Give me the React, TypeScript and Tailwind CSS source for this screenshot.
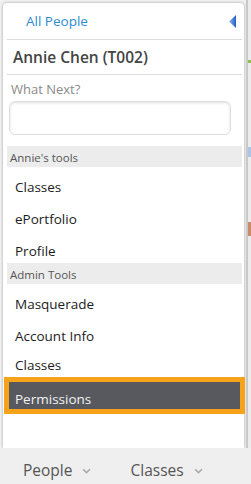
import React from "react";

function Chevron() {
  return (
    <svg width="9" height="6" viewBox="0 0 9 6" className="ml-[10px] mt-[9px]">
      <path d="M1 1.2 L4.5 4.6 L8 1.2" fill="none" stroke="#a9a9a9" strokeWidth="1.6" />
    </svg>
  );
}

function Item({ label }: { label: string }) {
  return (
    <div className="h-[32px] pt-[11px] pl-[8px] text-[13.5px] leading-[19px] text-[#1c1c1c]">{label}</div>
  );
}

function Header({ label }: { label: string }) {
  return (
    <div className="h-[21px] bg-[#ececec] pl-[3px] pt-[3px] text-[11.5px] leading-[17px] text-[#555]">{label}</div>
  );
}

export default function App() {
  return (
    <div
      className="w-[251px] h-[484px] flex flex-col bg-[#f1f1f1] overflow-hidden"
      style={{ fontFamily: '"Open Sans", "Noto Sans", sans-serif' }}
    >
      <div className="flex h-[448px]">
        <div className="w-[246px] pt-[3px] pl-[3px] pr-[2px] bg-[#f1f1f1]">
          <div className="h-[445px] bg-white rounded-t-[4px] shadow-[0_0_3px_rgba(0,0,0,0.35)] pl-[4px] pr-[2px] flex flex-col">
            <div className="h-[36px] flex items-center justify-between pl-[19px] pr-[6px]">
              <span className="text-[13.5px] text-[#2c8dd1] mt-[1px]">All People</span>
              <svg width="7" height="13" viewBox="0 0 7 13">
                <defs>
                  <linearGradient id="tri" x1="0" y1="0" x2="1" y2="0">
                    <stop offset="0" stopColor="#8db8ee" />
                    <stop offset="1" stopColor="#1f5fc4" />
                  </linearGradient>
                </defs>
                <polygon points="7,0 7,13 0,6.5" fill="url(#tri)" />
              </svg>
            </div>
            <div className="h-px bg-[#dcdcdc]" />
            <div className="h-[34px] pl-[6px] pt-[6px] text-[15.5px] font-semibold leading-[22px] text-[#444]">
              Annie Chen (T002)
            </div>
            <div className="h-px bg-[#dcdcdc]" />
            <div className="pl-[4px] pt-[5px] text-[13px] leading-[18px] text-[#8a8a8a]">What Next?</div>
            <div className="mt-[3px] ml-[2px] mr-[11px] h-[34px] rounded-[6px] border border-[#dedede] shadow-[inset_0_1px_3px_rgba(0,0,0,0.12)]" />
            <div className="h-[11px]" />
            <Header label="Annie's tools" />
            <Item label="Classes" />
            <Item label="ePortfolio" />
            <Item label="Profile" />
            <Header label="Admin Tools" />
            <Item label="Masquerade" />
            <Item label="Account Info" />
            <div className="h-[29px] pt-[8px] pl-[8px] text-[13.5px] leading-[19px] text-[#1c1c1c] overflow-hidden">Classes</div>
            <div className="-mx-[3px] h-[37px] border-[5px] border-[#f7a21b] bg-[#57595e] pl-[6px] pt-[8px] text-[13.5px] leading-[19px] text-[#f2f2f2]">
              Permissions
            </div>
          </div>
        </div>
        <div className="flex-1 border-l-2 border-[#c9c9c9] bg-[#ececec] relative">
          <div className="absolute left-0 top-[60px] w-[3px] h-[3px] bg-[#8bc34a]" />
          <div className="absolute left-0 top-[147px] w-[3px] h-[10px] bg-[#a9c6ea]" />
          <div className="absolute left-0 top-[222px] w-[3px] h-[14px] bg-[#c98b6a]" />
        </div>
      </div>
      <div className="h-[36px] flex bg-[#efefef] pt-[11px] text-[15.5px] leading-[22px] text-[#555]">
        <div className="flex items-start pl-[23px]">
          <span>People</span>
          <Chevron />
        </div>
        <div className="flex items-start pl-[39px]">
          <span>Classes</span>
          <Chevron />
        </div>
      </div>
    </div>
  );
}
